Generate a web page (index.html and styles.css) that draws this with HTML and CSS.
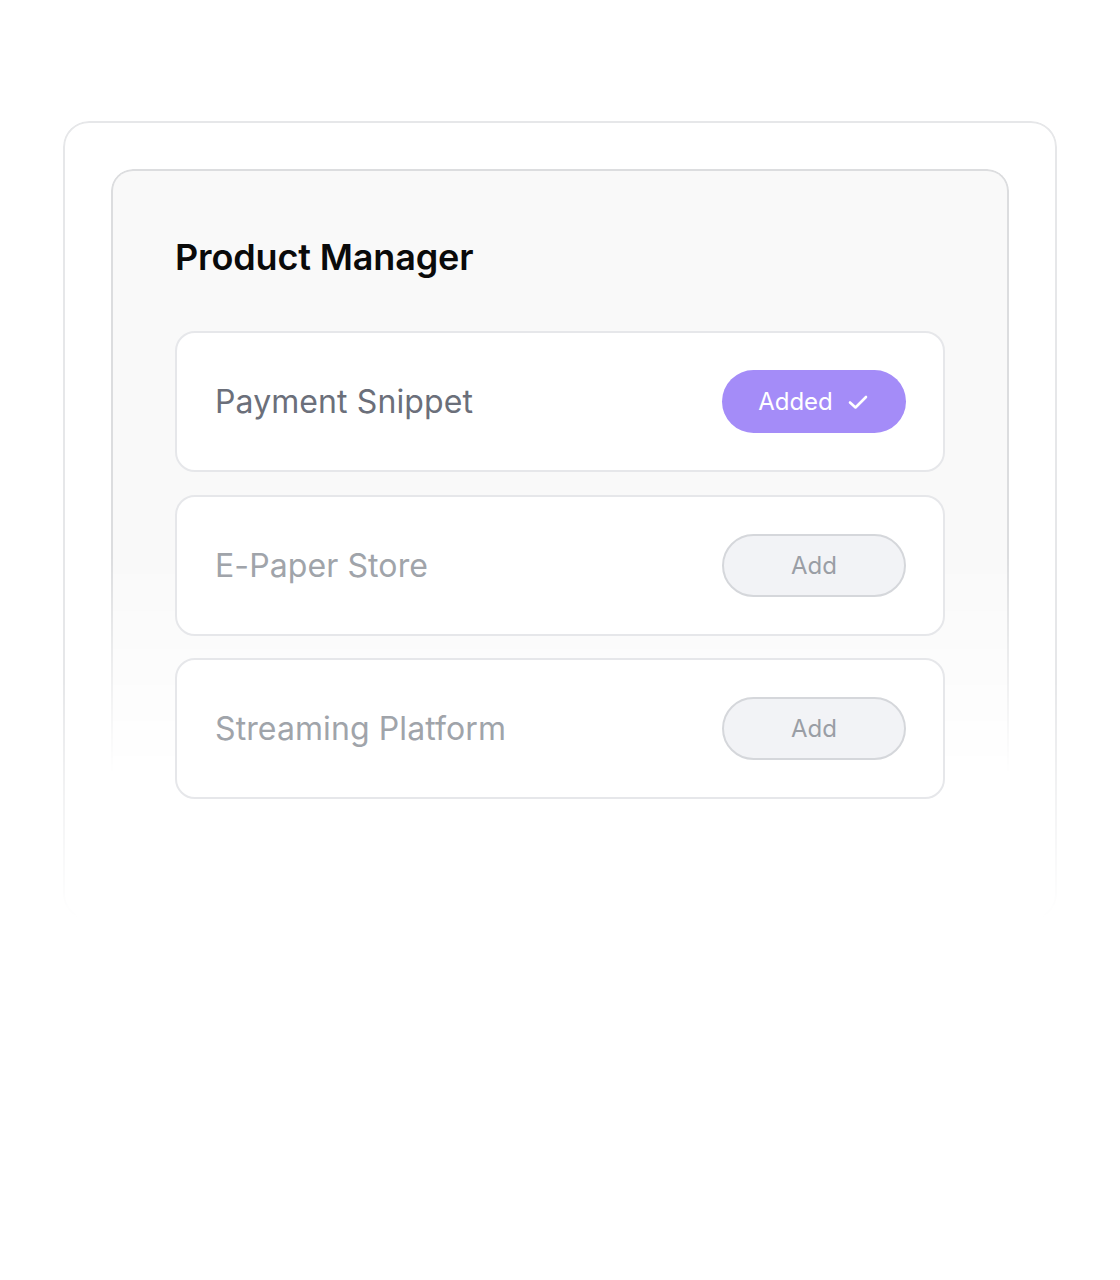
FILE: index.html
```html
<!DOCTYPE html>
<html lang="en">

<head>
	<meta charset="UTF-8">
	<meta name="viewport" content="width=device-width, initial-scale=1.0">
	<title>Product Manager</title>
	<link rel="stylesheet" href="styles.css">
</head>

<body>

	<div class="panel">
		<div class="manager">
			<h2 class="manager-title">Product Manager</h2>
			<ul class="product-list">
				<li class="product-row is-added">
					<span class="product-name">Payment Snippet</span>
					<button class="btn btn-added">
						Added
						<svg class="check" width="24" height="24" viewBox="0 0 24 24" fill="none">
							<polyline points="4 12.5 9.5 17.5 20 7" stroke="#fff" stroke-width="2.6" stroke-linecap="round" stroke-linejoin="round" />
						</svg>
					</button>
				</li>
				<li class="product-row">
					<span class="product-name">E-Paper Store</span>
					<button class="btn btn-add">Add</button>
				</li>
				<li class="product-row">
					<span class="product-name">Streaming Platform</span>
					<button class="btn btn-add">Add</button>
				</li>
			</ul>
		</div>
	</div>

</body>

</html>
```

FILE: styles.css
```css
body {
	margin: 0;
	background-color: #fff;
	font-family: Inter, "Noto Sans", sans-serif;
}

/* Outer panel */

.panel {
	position: relative;
	margin: 121px 63px 0;
	padding: 48px;
}

.panel::before {
	content: "";
	position: absolute;
	inset: 0;
	border: 2px solid #e6e7e9;
	border-radius: 26px;
	background-color: #fff;
	-webkit-mask-image: linear-gradient(to bottom, #000 70%, transparent 100%);
	mask-image: linear-gradient(to bottom, #000 70%, transparent 100%);
}

/* Inner manager card */

.manager {
	position: relative;
	padding: 66px 64px 73px;
}

.manager::before {
	content: "";
	position: absolute;
	inset: 0;
	border: 2px solid #dcdddf;
	border-bottom: none;
	border-radius: 22px 22px 0 0;
	background-color: #f9f9f9;
	-webkit-mask-image: linear-gradient(to bottom, #000 55%, rgba(0, 0, 0, 0.4) 74%, transparent 86%);
	mask-image: linear-gradient(to bottom, #000 55%, rgba(0, 0, 0, 0.4) 74%, transparent 86%);
}

.manager-title {
	position: relative;
	margin: 0 0 52px;
	font-size: 36px;
	line-height: 44px;
	font-weight: 600;
	color: #0a0a0a;
	letter-spacing: -0.15px;
}

/* Product rows */

.product-list {
	position: relative;
	list-style: none;
	margin: 0;
	padding: 0;
	display: flex;
	flex-direction: column;
	gap: 22.5px;
}

.product-row {
	box-sizing: border-box;
	height: 141px;
	padding: 0 37px 0 38px;
	display: flex;
	align-items: center;
	justify-content: space-between;
	background-color: #fff;
	border: 2px solid #e6e7ea;
	border-radius: 20px;
}

.product-name {
	font-size: 32px;
	color: #a0a4aa;
	letter-spacing: 0.1px;
}

.is-added .product-name {
	color: #6b6f7a;
}

/* Buttons */

.btn {
	box-sizing: border-box;
	width: 184px;
	height: 63px;
	border-radius: 32px;
	font-family: inherit;
	font-size: 24px;
	display: flex;
	align-items: center;
	justify-content: center;
	gap: 13px;
	cursor: pointer;
}

.btn-added {
	background-color: #a48cf8;
	color: #fff;
	border: none;
}

.btn-add {
	background-color: #f2f3f6;
	color: #9a9ea5;
	border: 2px solid #d5d7db;
}
```
